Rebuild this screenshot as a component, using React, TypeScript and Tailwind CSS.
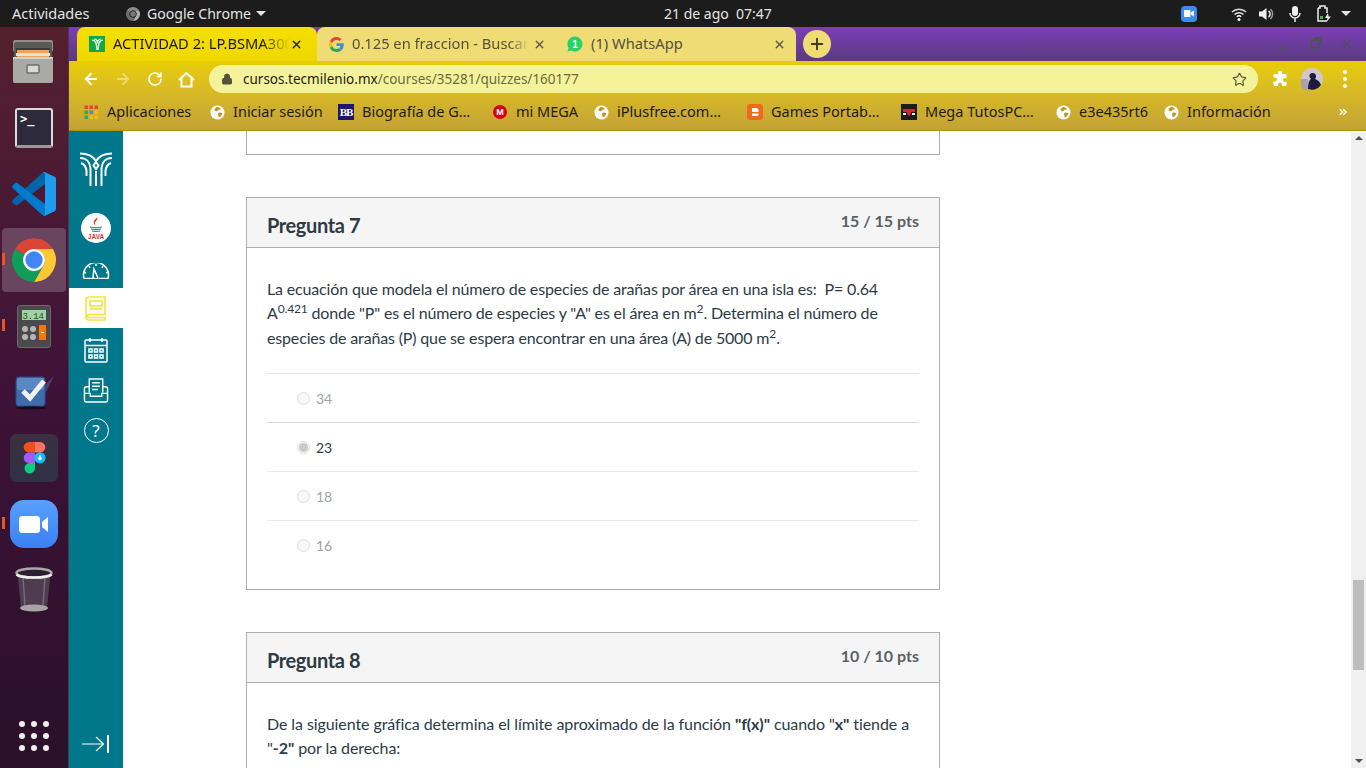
import React from "react";
import { ArrowLeft, ArrowRight, RotateCw, Lock, Star, X, Plus, ChevronsRight } from "lucide-react";

const ui = "font-['Noto_Sans',sans-serif]";

const Globe = () => (
  <svg width="15" height="15" viewBox="0 0 16 16" className="shrink-0">
    <circle cx="8" cy="8" r="7.5" fill="#fff" />
    <path d="M8 2.2c1.6.3 2.7 1 3.6 2-.9.9-1.700.5-2.600.9-.8.4-.5 1.300-1.400 1.500C6.500 6.900 5.500 6 4.700 5.200 5.200 3.800 6.500 2.500 8 2.200z" fill="#b89a22" />
    <path d="M9.500 8.200c1.300-.3 2.700.1 3.700.7-.4 2-1.900 3.700-3.900 4.400-.7-.9.1-1.700-.6-2.700-.4-.8 0-2.100.8-2.400z" fill="#b89a22" />
  </svg>
);

const Bookmark = ({ icon, label, width, gap = 8 }: { icon: React.ReactNode; label: string; width: number; gap?: number }) => (
  <div className="flex items-center shrink-0" style={{ gap }}>
    {icon}
    <span className="pb-[2px] text-[14.500px] leading-none text-[#1e1c10] whitespace-nowrap" style={{ width }}>{label}</span>
  </div>
);

const AppsIcon = () => (
  <svg width="15" height="15" viewBox="0 0 15 15" className="shrink-0">
    {[
      "#ea4335", "#ea4335", "#ea4335",
      "#34a853", "#4285f4", "#fbbc05",
      "#34a853", "#fbbc05", "#fbbc05",
    ].map((c, i) => (
      <rect key={i} x={(i % 3) * 5 + 0.5} y={Math.floor(i / 3) * 5 + 0.5} width="3.500" height="3.500" fill={c} />
    ))}
  </svg>
);

const GoogleG = () => (
  <svg width="15" height="15" viewBox="0 0 48 48" className="shrink-0">
    <path fill="#EA4335" d="M24 9.500c3.500 0 6.700 1.200 9.200 3.600l6.900-6.900C35.900 2.400 30.500 0 24 0 14.600 0 6.500 5.400 2.600 13.200l8 6.200C12.400 13.700 17.700 9.500 24 9.500z" />
    <path fill="#4285F4" d="M47 24.500c0-1.600-.1-3.100-.4-4.500H24v9h12.900c-.6 3-2.200 5.500-4.700 7.200l7.700 6c4.500-4.200 7.100-10.300 7.100-17.700z" />
    <path fill="#FBBC05" d="M10.600 28.600c-.5-1.400-.8-3-.8-4.600s.3-3.200.8-4.600l-8-6.200C.9 16.500 0 20.100 0 24s.9 7.500 2.600 10.800l8-6.200z" />
    <path fill="#34A853" d="M24 48c6.500 0 11.900-2.100 15.900-5.800l-7.700-6c-2.200 1.500-4.900 2.300-8.200 2.300-6.300 0-11.600-4.200-13.400-9.900l-8 6.200C6.500 42.600 14.600 48 24 48z" />
  </svg>
);

const ChromeLogo = ({ size, gray = false }: { size: number; gray?: boolean }) => (
  <svg width={size} height={size} viewBox="0 0 48 48" className="shrink-0">
    <path d="M24 3A21 21 0 0 1 42.200 13.500H24A10.500 10.500 0 0 0 14.900 18.750L5.800 13.500A21 21 0 0 1 24 3z" fill={gray ? "#8a8a8a" : "#db4437"} />
    <path d="M42.200 13.500A21 21 0 0 1 24 45L33.100 29.250A10.500 10.500 0 0 0 24 13.500z" fill={gray ? "#b0b0b0" : "#fcc934"} />
    <path d="M24 45A21 21 0 0 1 5.800 13.500L14.900 18.750A10.500 10.500 0 0 0 33.100 29.250z" fill={gray ? "#6e6e6e" : "#0f9d58"} />
    <circle cx="24" cy="24" r="10.500" fill={gray ? "#2a2a2a" : "#fff"} />
    <circle cx="24" cy="24" r="8.300" fill={gray ? "#777" : "#4285f4"} />
  </svg>
);

const FilesIcon = () => (
  <svg width="44" height="46" viewBox="0 0 44 46">
    <rect x="1" y="1" width="40" height="12" rx="2" fill="#8d8d8a" />
    <rect x="2" y="3" width="38" height="40" rx="2" fill="#5a5a58" />
    <rect x="4" y="9" width="34" height="8" fill="#3c3c3a" />
    <rect x="5" y="11" width="32" height="8" fill="#f1a35c" />
    <rect x="4" y="14" width="34" height="3" fill="#e9e3d4" />
    <rect x="1" y="18" width="40" height="26" rx="2" fill="#a9a9a6" />
    <rect x="1" y="18" width="40" height="2" fill="#cfcfcc" />
    <rect x="15" y="26" width="12" height="8" rx="1" fill="#d8d8d5" stroke="#6d6d6a" strokeWidth="1.500" />
  </svg>
);

const VsCode = () => (
  <svg width="44" height="44" viewBox="0 0 100 100">
    <path fill="#0065a9" d="M96.500 10.800 75.900.9c-2.400-1.200-5.200-.7-7.100 1.200L1.400 63.500c-1.800 1.700-1.800 4.500 0 6.100l5.500 5c1.500 1.300 3.700 1.400 5.300.2L93.400 13.100c2.700-2.100 6.600-.1 6.600 3.300v-.2c0-2.400-1.400-4.600-3.500-5.400z" />
    <path fill="#007acc" d="M96.500 89.200 75.900 99.100c-2.400 1.200-5.200.7-7.100-1.200L1.400 36.500c-1.800-1.700-1.800-4.500 0-6.100l5.500-5c1.500-1.300 3.700-1.400 5.300-.2l81.200 61.700c2.700 2.100 6.600.1 6.600-3.300v.2c0 2.400-1.400 4.600-3.500 5.400z" />
    <path fill="#1f9cf0" d="M75.900 99.100c-2.400 1.200-5.200.6-7.100-1.200 2.300 2.300 6.200.7 6.200-2.600V4.700c0-3.300-3.900-4.900-6.200-2.600 1.900-1.900 4.700-2.400 7.100-1.200l20.600 9.900c2.200 1 3.500 3.200 3.500 5.600v67.200c0 2.400-1.400 4.600-3.500 5.600z" />
  </svg>
);

const Calculator = () => (
  <svg width="34" height="43" viewBox="0 0 34 43">
    <rect x="0.500" y="0.500" width="33" height="42" rx="2.500" fill="#4a4a4c" stroke="#6a6a6c" />
    <rect x="5" y="5" width="24" height="10" fill="#9fd3a0" />
    <text x="27" y="13.500" textAnchor="end" fontSize="9" fontFamily="'Liberation Mono',monospace" fill="#2d4a30">3.14</text>
    <circle cx="8" cy="24" r="3" fill="#b5b5b5" />
    <circle cx="16" cy="24" r="3" fill="#b5b5b5" />
    <circle cx="8" cy="32" r="3" fill="#b5b5b5" />
    <circle cx="16" cy="32" r="3" fill="#b5b5b5" />
    <rect x="22" y="20" width="7" height="15" fill="#f57900" />
    <rect x="24" y="27" width="3" height="1" fill="#fff" />
  </svg>
);

const Tasks = () => (
  <svg width="44" height="44" viewBox="0 0 44 44">
    <path d="M26 22 42 6 32 26z" fill="#5a7db8" opacity="0.45" />
    <rect x="4" y="7" width="29" height="29" rx="3" fill="#3f6cac" stroke="#2c4f85" />
    <rect x="5" y="8" width="27" height="12" rx="2" fill="#5b88c4" />
    <path d="M11 21l7 7L32 11" fill="none" stroke="#f2f2f2" strokeWidth="5" />
    <ellipse cx="19" cy="38" rx="16" ry="1.500" fill="#170a16" />
  </svg>
);

const Figma = () => (
  <div className="w-[48px] h-[48px] rounded-[6px] bg-gradient-to-b from-[#3a3040] to-[#2f3146] flex items-center justify-center">
    <svg width="24" height="32" viewBox="0 0 24 32">
      <path d="M6 0h6v10.500H6A5.250 5.250 0 0 1 6 0z" fill="#f24e1e" transform="translate(1 0)" />
      <path d="M13 0h5a5.250 5.250 0 0 1 0 10.500h-5z" fill="#ff7262" />
      <path d="M7 10.500h6V21H7a5.250 5.250 0 0 1 0-10.500z" fill="#a259ff" />
      <path d="M7 21h6v5.250A5.250 5.250 0 1 1 7 21z" fill="#0acf83" />
      <circle cx="18" cy="15.800" r="5.600" fill="#1abcfe" />
      <path d="M18 12.500l2 4.500-2 1.500-2-1.500z" fill="#fff" />
    </svg>
  </div>
);

const Zoom = () => (
  <div className="w-[48px] h-[48px] rounded-[14px] bg-gradient-to-b from-[#59a0ff] to-[#3a80f5] flex items-center justify-center">
    <svg width="30" height="17" viewBox="0 0 30 17">
      <rect x="0" y="0" width="21" height="17" rx="3.500" fill="#fff" />
      <path d="M23 6l6-5v15l-6-5z" fill="#fff" />
    </svg>
  </div>
);

const Trash = () => (
  <svg width="38" height="46" viewBox="0 0 38 46">
    <path d="M2.500 7l3.500 34h26l3.500-34z" fill="#4f3c50" />
    <path d="M8 10l2 29M30 10l-2 29" stroke="#77677a" strokeWidth="1.500" />
    <ellipse cx="19" cy="41" rx="14" ry="3.500" fill="#a5a5a2" />
    <ellipse cx="19" cy="6" rx="17.500" ry="4.500" fill="#2f1d30" stroke="#a8a8a5" strokeWidth="2.500" />
    <path d="M1.500 7.500c4 4 31 4 35 0" fill="none" stroke="#eeeeea" strokeWidth="2.500" />
  </svg>
);

const DockItem = ({ children, running = false, active = false }: { children: React.ReactNode; running?: boolean; active?: boolean }) => (
  <div className="relative h-[66px] flex items-center justify-center w-full">
    {active && <div className="absolute left-[2px] top-[1px] w-[64px] h-[64px] rounded-[4px] bg-[#6a4560]" />}
    {running && <div className="absolute left-[2px] top-[26px] w-[3px] h-[12px] bg-[#e95420]" />}
    <div className="relative flex">{children}</div>
  </div>
);

const Dock = () => (
  <div className="w-[69px] shrink-0 flex flex-col pt-[2px] pb-[17px] bg-gradient-to-b from-[#55202f] via-[#3d1238] to-[#2a1029] border-r border-[#4a3a48]">
    <DockItem><FilesIcon /></DockItem>
    <DockItem>
      <div className="w-[38px] h-[40px] rounded-[3px] bg-[#2d2a3c] border-2 border-[#dcdcdc] border-b-[3px] border-b-[#999] font-['DejaVu_Sans_Mono',monospace] text-[12px] leading-[12px] text-white px-[3px] pt-[3px] font-bold">&gt;_</div>
    </DockItem>
    <DockItem><VsCode /></DockItem>
    <DockItem running active><ChromeLogo size={50} /></DockItem>
    <DockItem running><Calculator /></DockItem>
    <DockItem><Tasks /></DockItem>
    <DockItem><Figma /></DockItem>
    <DockItem running><Zoom /></DockItem>
    <DockItem><Trash /></DockItem>
    <div className="mt-auto mx-auto grid grid-cols-3 gap-[6px]">
      {Array.from({ length: 9 }, (_, i) => (
        <div key={i} className="w-[6px] h-[6px] rounded-full bg-[#eee]" />
      ))}
    </div>
  </div>
);

const TopBar = () => (
  <div className={`h-[27px] shrink-0 bg-[#1c1c1c] flex items-center text-[14.500px] text-[#e4e4e4] ${ui}`}>
    <span className="ml-[12px] w-[78px] whitespace-nowrap">Actividades</span>
    <div className="ml-[35px]"><ChromeLogo size={16} gray /></div>
    <span className="ml-[6px] w-[105px] text-[14.100px] whitespace-nowrap">Google Chrome</span>
    <div className="ml-[4px] w-0 h-0 border-x-[5px] border-x-transparent border-t-[5px] border-t-[#e4e4e4]" />
    <span className="ml-[398px] w-[107px] whitespace-nowrap text-[14px] text-center">21 de ago&nbsp;&nbsp;07:47</span>
    <div className="ml-[410px] w-[16px] h-[16px] rounded-[4px] bg-[#3d8bf2] flex items-center justify-center">
      <svg width="10" height="7" viewBox="0 0 10 7"><rect width="6.500" height="7" rx="1" fill="#fff" /><path d="M7 2.500 10 .5v6L7 4.500z" fill="#fff" /></svg>
    </div>
    <svg width="16" height="14" viewBox="0 0 16 14" className="ml-[34px]">
      <path d="M1 5a10 10 0 0 1 14 0M3.500 7.500a6.500 6.500 0 0 1 9 0" fill="none" stroke="#ddd" strokeWidth="1.500" />
      <path d="M5.800 9.800a3.200 3.200 0 0 1 4.400 0" fill="none" stroke="#fff" strokeWidth="1.500" />
      <circle cx="8" cy="12.500" r="1.500" fill="#fff" />
    </svg>
    <svg width="16" height="14" viewBox="0 0 16 14" className="ml-[12px]">
      <path d="M0 4.500h3L7.500 1v12L3 9.500H0z" fill="#eee" />
      <path d="M9.500 4a3.500 3.500 0 0 1 0 6" fill="none" stroke="#eee" strokeWidth="1.500" />
      <path d="M11.500 2a7 7 0 0 1 0 10" fill="none" stroke="#999" strokeWidth="1.500" />
    </svg>
    <svg width="12" height="16" viewBox="0 0 12 16" className="ml-[14px]">
      <rect x="3" y="0" width="6" height="10" rx="3" fill="#eee" />
      <path d="M1 7a5 5 0 0 0 10 0M6 12v4" fill="none" stroke="#eee" strokeWidth="1.500" />
    </svg>
    <svg width="14" height="17" viewBox="0 0 14 17" className="ml-[16px]">
      <path d="M1 3h2V1h5v2h2v5M10 16H1V3" fill="none" stroke="#eee" strokeWidth="1.500" />
      <rect x="3" y="11" width="3" height="3" fill="#4caf50" />
      <path d="M11 8 8 13h2.500L9.500 17 14 11.500h-2.500z" fill="#eee" />
    </svg>
    <div className="ml-[10px] w-0 h-0 border-x-[5px] border-x-transparent border-t-[5px] border-t-[#e4e4e4]" />
  </div>
);

const TabClose = ({ dark = false }: { dark?: boolean }) => (
  <X size={13} strokeWidth={2.500} className={dark ? "text-[#222] shrink-0" : "text-[#555] shrink-0"} />
);

const TabStrip = () => (
  <div className={`h-[34px] shrink-0 flex items-stretch pl-[8px] bg-gradient-to-b from-[#7c3db8] to-[#5a3a80] ${ui}`}>
    <div className="w-[240px] rounded-t-[8px] bg-gradient-to-b from-[#f5df00] to-[#efd800] flex items-center pl-[12px] pr-[14px]">
      <div className="w-[16px] h-[16px] bg-[#12a84a] flex items-center justify-center shrink-0">
        <svg width="13" height="13" viewBox="0 0 12 12">
          <path d="M1 2c3 0 4 2 4.500 9M11 2c-3 0-4 2-4.500 9M3 1c2 0 3 2 3 4 0-2 1-4 3-4" fill="none" stroke="#e4f8d8" strokeWidth="1.300" />
        </svg>
      </div>
      <span className="ml-[8px] w-[180px] pb-[2px] text-[14.700px] text-[#1c1a05] whitespace-nowrap overflow-hidden [mask-image:linear-gradient(90deg,#000_84%,transparent)]">ACTIVIDAD 2: LP.BSMA3000</span>
      <div className="ml-auto"><TabClose dark /></div>
    </div>
    <div className="w-[239px] rounded-tl-[8px] bg-[#efdc74] flex items-center pl-[12px] pr-[10px]">
      <GoogleG />
      <span className="ml-[8px] w-[176px] pb-[2px] text-[14.700px] text-[#55513a] whitespace-nowrap overflow-hidden [mask-image:linear-gradient(90deg,#000_90%,transparent)]">0.125 en fraccion - Buscar</span>
      <div className="ml-auto"><TabClose /></div>
    </div>
    <div className="w-[240px] rounded-tr-[8px] bg-[#efdc74] flex items-center pl-[11px] pr-[10px]">
      <svg width="16" height="16" viewBox="0 0 16 16" className="shrink-0">
        <path d="M8 .5a7.500 7.500 0 0 0-6.400 11.400L.5 15.500l3.700-1A7.500 7.500 0 1 0 8 .5z" fill="#25d366" />
        <text x="8" y="11.500" textAnchor="middle" fontSize="10" fontWeight="700" fontFamily="'Liberation Sans',sans-serif" fill="#fff">1</text>
      </svg>
      <span className="ml-[8px] pb-[2px] text-[14.700px] text-[#55513a] whitespace-nowrap">(1) WhatsApp</span>
      <div className="ml-auto"><TabClose /></div>
    </div>
    <div className="ml-[7px] my-auto w-[28px] h-[28px] rounded-full bg-[#efdc74] flex items-center justify-center">
      <Plus size={18} strokeWidth={2.500} className="text-[#3c3a28]" />
    </div>
    <div className="ml-auto flex items-center pr-[12px]">
      <div className="w-[10px] h-[2px] bg-[#4f4f60] mt-[8px]" />
      <div className="ml-[22px] relative w-[10px] h-[10px] border-2 border-[#4f4f60]">
        <div className="absolute -top-[4px] left-[2px] w-[8px] h-[8px] border-t-2 border-r-2 border-[#4f4f60]" />
      </div>
      <X size={14} strokeWidth={2.500} className="ml-[20px] text-[#4f4f60]" />
    </div>
  </div>
);

const Toolbar = () => (
  <div className={`h-[36px] shrink-0 flex items-center pl-[13px] ${ui}`}>
    <ArrowLeft size={18} strokeWidth={2.500} className="text-white" />
    <ArrowRight size={18} strokeWidth={2.500} className="ml-[14px] text-[#ecdc70]" />
    <RotateCw size={16} strokeWidth={2.500} className="ml-[15px] text-white" />
    <svg width="17" height="17" viewBox="0 0 17 17" fill="none" stroke="#fff" strokeWidth="2" className="ml-[15px]">
      <path d="M1 9 8.500 2 16 9M3.500 7.500V15.500h10V7.500" />
    </svg>
    <div className="ml-[14px] w-[1049px] h-[28px] rounded-full bg-[#f5f39a] flex items-center pl-[12px] pr-[11px]">
      <Lock size={12} fill="#55533a" strokeWidth={2} className="text-[#55533a]" />
      <span className="ml-[10px] text-[13.500px] text-[#1e1d10] whitespace-nowrap">cursos.tecmilenio.mx<span className="text-[#6b6a42]">/courses/35281/quizzes/160177</span></span>
      <Star size={15} strokeWidth={1.800} className="ml-auto text-[#55533a]" />
    </div>
    <svg width="16" height="16" viewBox="0 0 16 16" className="ml-[14px]">
      <path d="M6 1.500a2 2 0 0 1 4 0V3h3.500a1 1 0 0 1 1 1v3H13a2 2 0 0 0 0 4h1.500v3a1 1 0 0 1-1 1H10v-1.500a2 2 0 0 0-4 0V15H2.500a1 1 0 0 1-1-1v-3.500H3a2 2 0 0 0 0-4H1.500V4a1 1 0 0 1 1-1H6z" fill="#fff" />
    </svg>
    <svg width="22" height="22" viewBox="0 0 22 22" className="ml-[13px]">
      <circle cx="11" cy="11" r="11" fill="#cfc6cf" />
      <path d="M0 11h7v11H3a11 11 0 0 1-3-11z" fill="#a9a1ad" />
      <path d="M7 21c0-5 1-9 3-10a4 4 0 0 1-1-5c2-2 6-1 6 2 0 1 0 2-1 3 3 1 5 3 6 6a11 11 0 0 1-13 4z" fill="#1e1a3e" />
    </svg>
    <div className="ml-[20px] flex flex-col gap-[3px]">
      <div className="w-[4px] h-[4px] rounded-full bg-white" />
      <div className="w-[4px] h-[4px] rounded-full bg-white" />
      <div className="w-[4px] h-[4px] rounded-full bg-white" />
    </div>
  </div>
);

const BookmarksBar = () => (
  <div className={`h-[30px] shrink-0 flex items-center pl-[15px] gap-[17px] ${ui}`}>
    <Bookmark icon={<AppsIcon />} label="Aplicaciones" width={86} />
    <Bookmark icon={<Globe />} label="Iniciar sesión" width={88} />
    <Bookmark
      icon={
        <div className="w-[16px] h-[16px] bg-[#1c1670] text-white text-[11px] font-bold leading-[16px] text-center tracking-[-1px] font-['Liberation_Serif',serif] shrink-0">BB</div>
      }
      label="Biografía de G…"
      width={114}
    />
    <Bookmark
      icon={
        <div className="w-[14px] h-[14px] rounded-full bg-[#d9001b] text-white text-[9px] font-bold leading-[14px] text-center font-['Liberation_Sans',sans-serif] shrink-0">M</div>
      }
      label="mi MEGA"
      width={61}
      gap={9}
    />
    <Bookmark icon={<Globe />} label="iPlusfree.com…" width={113} />
    <Bookmark
      icon={
        <svg width="16" height="16" viewBox="0 0 16 16" className="shrink-0">
          <rect width="16" height="16" rx="3" fill="#f06a1d" />
          <path d="M5 4h4a2.500 2.500 0 0 1 2.500 2.500V8H5zM5 9.500h6.500V11A1.500 1.500 0 0 1 10 12H5z" fill="#fff" />
        </svg>
      }
      label="Games Portab…"
      width={113}
    />
    <Bookmark
      icon={
        <svg width="16" height="16" viewBox="0 0 16 16" className="shrink-0">
          <rect width="16" height="16" fill="#1d1d1d" />
          <path d="M2 5h12v3h-4v2l-2 2-2-2V8H2z" fill="#e2222a" />
          <path d="M2 9h3v2H2zM11 9h3v2h-3z" fill="#fff" />
        </svg>
      }
      label="Mega TutosPC…"
      width={114}
    />
    <Bookmark icon={<Globe />} label="e3e435rt6" width={68} />
    <Bookmark icon={<Globe />} label="Información" width={84} />
    <ChevronsRight size={12} strokeWidth={3} className="ml-[49px] text-white" />
  </div>
);

const LmsLogo = () => (
  <svg width="32" height="34" viewBox="0 0 32 34" fill="none" stroke="#fff" strokeWidth="2">
    <path d="M0 1.500C8 1.500 13 4 16 9 19 4 24 1.500 32 1.500" />
    <path d="M0 6c6 0 10 4 10.500 10v18M32 6c-6 0-10 4-10.500 10v18" />
    <path d="M1 11c3 1 5 4 5.500 8v5M31 11c-3 1-5 4-5.500 8v5" />
    <path d="M16 10l2.500 3.500L16 17l-2.500-3.500zM16 19v15" />
  </svg>
);

const Sidebar = () => (
  <div className="w-[54px] shrink-0 bg-[#00778b] flex flex-col items-center pt-[21px] pb-[15px]">
    <LmsLogo />
    <div className="mt-[27px] w-[30px] h-[30px] rounded-full bg-white flex items-center justify-center">
      <svg width="22" height="24" viewBox="0 0 22 24">
        <path d="M12 1c2 3-3 4-2 7 .3 1 1 2 1 2-2-2-3-3-2-5 .5-2 3-2 3-4z" fill="#d9342b" />
        <path d="M5 11c3 1 9 1 12 0M6 13c3 .8 7 .8 10 0M7 15c2 .5 6 .5 8 0" stroke="#3464a6" strokeWidth="1" fill="none" />
        <text x="11" y="23" textAnchor="middle" fontSize="6.500" fontWeight="700" fontFamily="'Liberation Sans',sans-serif" fill="#d9342b">JAVA</text>
      </svg>
    </div>
    <svg width="28" height="16" viewBox="0 0 28 16" fill="none" stroke="#fff" strokeWidth="1.500" className="mt-[20px]">
      <path d="M2 15.500A12.500 12.500 0 1 1 26 15.500H17M11 15.500H2" />
      <path d="M11 14a3 3 0 0 0 5 1L12 6z" />
      <path d="M14 1v2M21 3l-1 2M26 9l-2 1M2 9l2 1M7 3l1 2" />
    </svg>
    <div className="mt-[9px] w-full h-[40px] bg-white flex items-center justify-center">
      <svg width="22" height="25" viewBox="0 0 22 25" fill="none" stroke="#f2e43a" strokeWidth="1.600">
        <path d="M20 1H4a3 3 0 0 0-3 3v17a3 3 0 0 0 3 3h16v-2.500H4a1.500 1.500 0 0 1 0-3h16z" />
        <rect x="5" y="5" width="12" height="5" />
        <path d="M5 13h12" />
      </svg>
    </div>
    <svg width="24" height="26" viewBox="0 0 24 26" fill="none" stroke="#fff" strokeWidth="1.500" className="mt-[9px]">
      <rect x="1" y="3" width="22" height="22" rx="1" />
      <path d="M1 8.500h22M6 1v4M18 1v4" />
      <path d="M5 12h3v3H5zM10.500 12h3v3h-3zM16 12h3v3h-3zM5 18h3v3H5zM10.500 18h3v3h-3zM16 18h3v3h-3z" />
    </svg>
    <svg width="26" height="25" viewBox="0 0 26 26" fill="none" stroke="#fff" strokeWidth="1.500" className="mt-[15px]">
      <path d="M6 15V1h14v14" />
      <path d="M9 5h8M9 8.500h8M9 12h6" />
      <path d="M6 9H3a2 2 0 0 0-2 2v12a2 2 0 0 0 2 2h20a2 2 0 0 0 2-2V11a2 2 0 0 0-2-2h-3" />
      <path d="M1 16h6v3h12v-3h6" />
    </svg>
    <div className={`mt-[15px] w-[25px] h-[25px] rounded-full border-[1.500px] border-white flex items-center justify-center text-white text-[17px] leading-none ${ui}`}>?</div>
    <svg width="28" height="18" viewBox="0 0 28 18" fill="none" stroke="#fff" className="mt-auto">
      <path d="M0 9h21M14 2l7.500 7-7.500 7" strokeWidth="1.200" />
      <path d="M26 0v18" strokeWidth="2" />
    </svg>
  </div>
);

const Radio = ({ checked = false }: { checked?: boolean }) => (
  <div className="w-[13px] h-[13px] rounded-full border border-[#dedede] bg-[#f8f8f8] flex items-center justify-center shrink-0">
    {checked && <div className="w-[9px] h-[9px] rounded-full bg-[#cacaca]" />}
  </div>
);

const Answer = ({ label, checked = false }: { label: string; checked?: boolean }) => (
  <div className="h-[49px] border-t border-[#e8e8e8] flex items-center pt-[2px] pl-[30px] gap-[6px]">
    <Radio checked={checked} />
    <span className={`text-[14px] font-['Lato',sans-serif] ${checked ? "text-[#2d3b45]" : "text-[#a0a4a8]"}`}>{label}</span>
  </div>
);

const CardHeader = ({ title, pts }: { title: string; pts: string }) => (
  <div className="h-[50px] bg-[#f5f5f5] border-b border-[#aeaeae] flex justify-between px-[20px] shrink-0">
    <h2 className="pt-[13px] text-[20px] leading-[28px] font-bold tracking-[-0.400px] text-[#2d3b45]">{title}</h2>
    <span className="pt-[12px] text-[16px] leading-[22px] font-bold text-[#5a6166]">{pts}</span>
  </div>
);

const Content = () => (
  <div className="flex-1 min-w-0 bg-white overflow-hidden pl-[123px] flex flex-col gap-[42px] font-['Lato',sans-serif] text-[16px] text-[#2d3b45]">
    <div className="w-[694px] h-[24px] shrink-0 border-x border-b border-[#aeaeae]" />

    <section className="w-[694px] h-[393px] shrink-0 border border-[#aeaeae]">
      <CardHeader title="Pregunta 7" pts="15 / 15 pts" />
      <div className="px-[20px]">
        <p className="pt-[29px] pb-[23.100px] leading-[24.300px] tracking-[-0.160px]">
          La ecuación que modela el número de especies de arañas por área en una isla es:&nbsp; P= 0.64 A<sup>0.421</sup> donde "P" es el número de especies y "A" es el área en m<sup>2</sup>. Determina el número de especies de arañas (P) que se espera encontrar en una área (A) de 5000 m<sup>2</sup>.
        </p>
        <Answer label="34" />
        <div className="[&>div]:border-[#d9d9d9]"><Answer label="23" checked /></div>
        <Answer label="18" />
        <Answer label="16" />
      </div>
    </section>

    <section className="w-[694px] shrink-0 border border-[#aeaeae]">
      <CardHeader title="Pregunta 8" pts="10 / 10 pts" />
      <div className="px-[20px]">
        <p className="pt-[29px] pb-[23.100px] leading-[24.300px] tracking-[-0.085px]">
          De la siguiente gráfica determina el límite aproximado de la función <strong>"f(x)"</strong> cuando "<strong>x"</strong> tiende a "<strong>-2"</strong> por la derecha:
        </p>
      </div>
    </section>
  </div>
);

const Scrollbar = () => (
  <div className="w-[15px] shrink-0 bg-[#f0f0f0] flex flex-col items-center relative">
    <div className="mt-[5px] w-0 h-0 border-x-[4px] border-x-transparent border-b-[4px] border-b-[#505050]" />
    <div className="mt-[440px] w-[11px] h-[90px] bg-[#bdbdbd]" />
    <div className="mt-auto mb-[5px] w-0 h-0 border-x-[4px] border-x-transparent border-t-[4px] border-t-[#505050]" />
  </div>
);

export default function App() {
  return (
    <div className="w-[1366px] h-[768px] overflow-hidden flex flex-col">
      <TopBar />
      <div className="flex-1 min-h-0 flex">
        <Dock />
        <div className="flex-1 min-w-0 flex flex-col">
          <TabStrip />
          <div className="shrink-0 h-[70px] bg-gradient-to-b from-[#e9cd00] to-[#c3a235] border-b border-[#a89500]">
            <Toolbar />
            <BookmarksBar />
          </div>
          <div className="flex-1 min-h-0 flex">
            <Sidebar />
            <Content />
            <Scrollbar />
          </div>
        </div>
      </div>
    </div>
  );
}
